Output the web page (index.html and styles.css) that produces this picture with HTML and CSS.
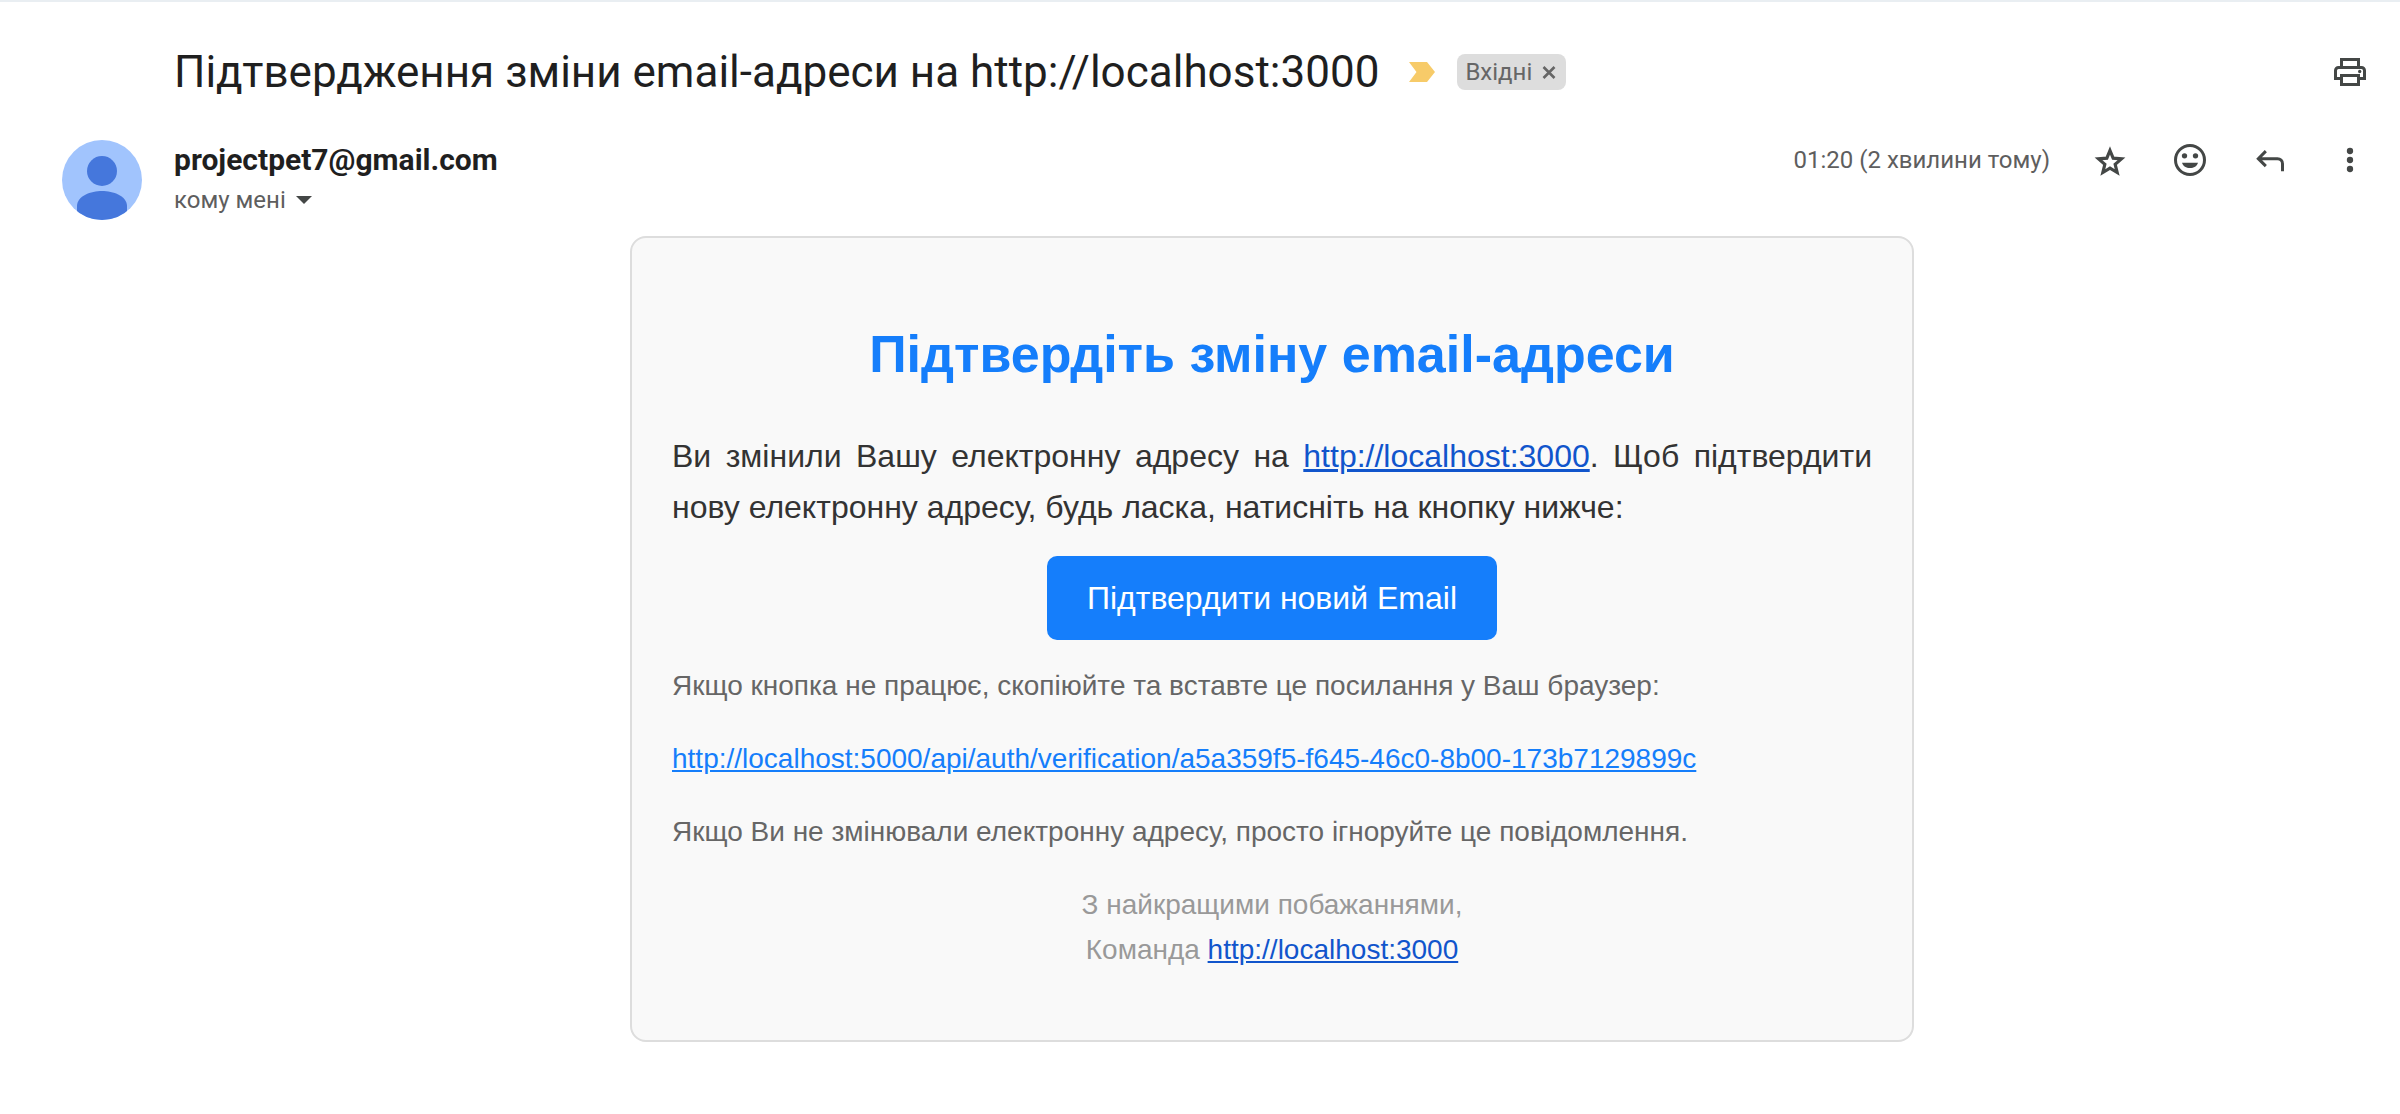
FILE: index.html
```html
<!DOCTYPE html>
<html lang="uk">
<head>
<meta charset="utf-8">
<title>Підтвердження зміни email-адреси</title>
<meta name="viewport" content="width=device-width, initial-scale=1">
<link rel="stylesheet" href="styles.css">
</head>
<body>
<main class="thread">
  <header class="subject">
    <h1 class="subject-text">Підтвердження зміни email-адреси на http://localhost:3000</h1>
    <button class="icon-button importance" aria-label="Важливий">
      <svg width="26" height="20" viewBox="0 0 26 20" fill="#f7cb69"><path d="M0 0h18l8 10-8 10H0l7.500-10z"/></svg>
    </button>
    <span class="chip">Вхідні
      <button class="icon-button" aria-label="Вилучити мітку">
        <svg width="14" height="14" viewBox="0 0 14 14" stroke="#666" stroke-width="2.600" fill="none"><path d="M1.500 2 12.500 13M12.500 2 1.500 13"/></svg>
      </button>
    </span>
    <button class="icon-button print" aria-label="Друкувати">
      <svg width="40" height="40" viewBox="0 0 24 24" fill="none" stroke="#444746" stroke-width="1.800"><path d="M6.900 9.300V4.500h10.200v4.800M6.900 15.900H3.300v-4.800c0-1 .8-1.800 1.800-1.800h13.800c1 0 1.800.8 1.800 1.800v4.800h-3.600M6.900 14.100h10.200v5.400H6.900z"/><circle cx="17.800" cy="11.700" r="1" fill="#444746" stroke="none"/></svg>
    </button>
  </header>

  <section class="message">
    <svg class="avatar" width="80" height="80" viewBox="0 0 80 80" role="img" aria-label="Фото профілю">
      <defs><clipPath id="disc"><circle cx="40" cy="40" r="40"/></clipPath></defs>
      <g clip-path="url(#disc)"><path fill="#a1c4fd" d="M0 0h80v80H0z"/><circle cx="40" cy="31" r="15" fill="#4577dc"/><path fill="#4577dc" d="M15 80V66c0-10 14-15 25-15s25 5 25 15v14z"/></g>
    </svg>
    <div class="sender">
      <span class="sender-name">projectpet7@gmail.com</span>
      <button class="recipient">кому мені
        <svg width="16" height="8" viewBox="0 0 16 8" fill="#444746"><path d="M0 0h16L8 8z"/></svg>
      </button>
    </div>
    <div class="actions">
      <span class="time">01:20 (2 хвилини тому)</span>
      <button class="icon-button" aria-label="Додати зірочку">
        <svg width="40" height="40" viewBox="0 0 24 24" fill="none" stroke="#444746" stroke-width="1.900" stroke-miterlimit="6"><path d="M12 6.300l1.900 4.600 5 .4-3.800 3.300 1.200 4.900-4.300-2.600-4.300 2.600 1.200-4.900-3.800-3.300 5-.4z"/></svg>
      </button>
      <button class="icon-button" aria-label="Додати реакцію">
        <svg width="40" height="40" viewBox="0 0 24 24" fill="#444746"><circle cx="12" cy="12" r="8.700" fill="none" stroke="#444746" stroke-width="1.800"/><circle cx="8.700" cy="9.500" r="1.600"/><circle cx="15.300" cy="9.500" r="1.600"/><path d="M7.200 13.600h9.600c-.6 2-2.500 3.200-4.800 3.200s-4.200-1.200-4.800-3.200z"/></svg>
      </button>
      <button class="icon-button" aria-label="Відповісти">
        <svg width="40" height="40" viewBox="0 0 24 24" fill="none" stroke="#444746" stroke-width="1.800"><path d="M9.500 6.700L5 11.200l4.500 4.500M5 11.200h11.500c1.700 0 3 1.300 3 3v4.500"/></svg>
      </button>
      <button class="icon-button" aria-label="Більше">
        <svg width="40" height="40" viewBox="0 0 24 24" fill="#444746"><circle cx="12" cy="6.600" r="1.900"/><circle cx="12" cy="12" r="1.900"/><circle cx="12" cy="17.400" r="1.900"/></svg>
      </button>
    </div>
    <article class="card">
      <h2 class="card-title">Підтвердіть зміну email-адреси</h2>
      <p class="lead">Ви змінили Вашу електронну адресу на <a href="http://localhost:3000">http://localhost:3000</a>. Щоб підтвердити нову електронну адресу, будь ласка, натисніть на кнопку нижче:</p>
      <a class="confirm" href="http://localhost:5000/api/auth/verification/a5a359f5-f645-46c0-8b00-173b7129899c">Підтвердити новий Email</a>
      <div class="notes">
        <p>Якщо кнопка не працює, скопіюйте та вставте це посилання у Ваш браузер:</p>
        <p><a class="verify-link" href="http://localhost:5000/api/auth/verification/a5a359f5-f645-46c0-8b00-173b7129899c">http://localhost:5000/api/auth/verification/a5a359f5-f645-46c0-8b00-173b7129899c</a></p>
        <p>Якщо Ви не змінювали електронну адресу, просто ігноруйте це повідомлення.</p>
        <p class="signature">З найкращими побажаннями,<br>Команда <a href="http://localhost:3000">http://localhost:3000</a></p>
      </div>
    </article>
  </section>
</main>
</body>
</html>
```
FILE: styles.css
```css
* {
  box-sizing: border-box;
}

body {
  margin: 0;
  background: #fff;
  color: #1f1f1f;
  font-family: Roboto, "Liberation Sans", sans-serif;
}

h1, h2, p {
  margin: 0;
}

button {
  padding: 0;
  border: 0;
  background: none;
  color: inherit;
  font: inherit;
}

svg {
  display: block;
}

.icon-button {
  display: flex;
}

.thread {
  border-top: 2px solid #e9eef2;
  padding: 36px 30px 72px 62px;
}

.subject {
  display: flex;
  align-items: center;
  height: 68px;
  padding-left: 112px;
}

.subject-text {
  font-size: 44px;
  font-weight: 400;
  line-height: 56px;
}

.importance {
  margin: 0 22px 0 30px;
}

.chip {
  display: flex;
  align-items: center;
  gap: 10px;
  height: 36px;
  padding: 0 10px 0 8px;
  border-radius: 8px;
  background: #ddd;
  color: #666;
  font-size: 24px;
}

.print {
  margin-left: auto;
}

.message {
  display: grid;
  grid-template-columns: 80px 1fr auto;
  grid-template-rows: 96px auto;
  column-gap: 32px;
  padding-top: 34px;
}

.sender {
  display: flex;
  flex-direction: column;
  align-items: flex-start;
}

.sender-name {
  font-size: 30px;
  font-weight: 700;
  line-height: 40px;
}

.recipient {
  display: flex;
  align-items: center;
  gap: 10px;
  color: #5e5e5e;
  font-size: 24px;
  line-height: 40px;
}

.actions {
  display: flex;
  align-items: center;
  gap: 40px;
  height: 40px;
}

.time {
  color: #5e5e5e;
  font-size: 24px;
}

.card {
  grid-column: 2 / -1;
  justify-self: center;
  width: 100%;
  max-width: 1284px;
  padding: 75px 40px 68px;
  border: 2px solid #ddd;
  border-radius: 16px;
  background: #f9f9f9;
  color: #333;
  font-family: "Liberation Sans", Arial, sans-serif;
  text-align: center;
}

.card a {
  color: #15c;
}

.card-title {
  margin-bottom: 35px;
  color: #157efb;
  font-size: 52px;
  line-height: 83px;
}

.lead {
  margin-bottom: 23px;
  font-size: 32px;
  line-height: 51px;
  text-align: justify;
}

.card .confirm {
  display: inline-block;
  padding: 16px 40px;
  border-radius: 10px;
  background: #157efb;
  color: #fff;
  font-size: 32px;
  line-height: 52px;
  text-decoration: none;
  vertical-align: top;
}

.notes {
  display: grid;
  gap: 28px;
  margin-top: 23px;
  color: #666;
  font-size: 28px;
  line-height: 45px;
  text-align: left;
}

.card .verify-link {
  color: #157efb;
}

.notes .signature {
  color: #999;
  text-align: center;
}
```
